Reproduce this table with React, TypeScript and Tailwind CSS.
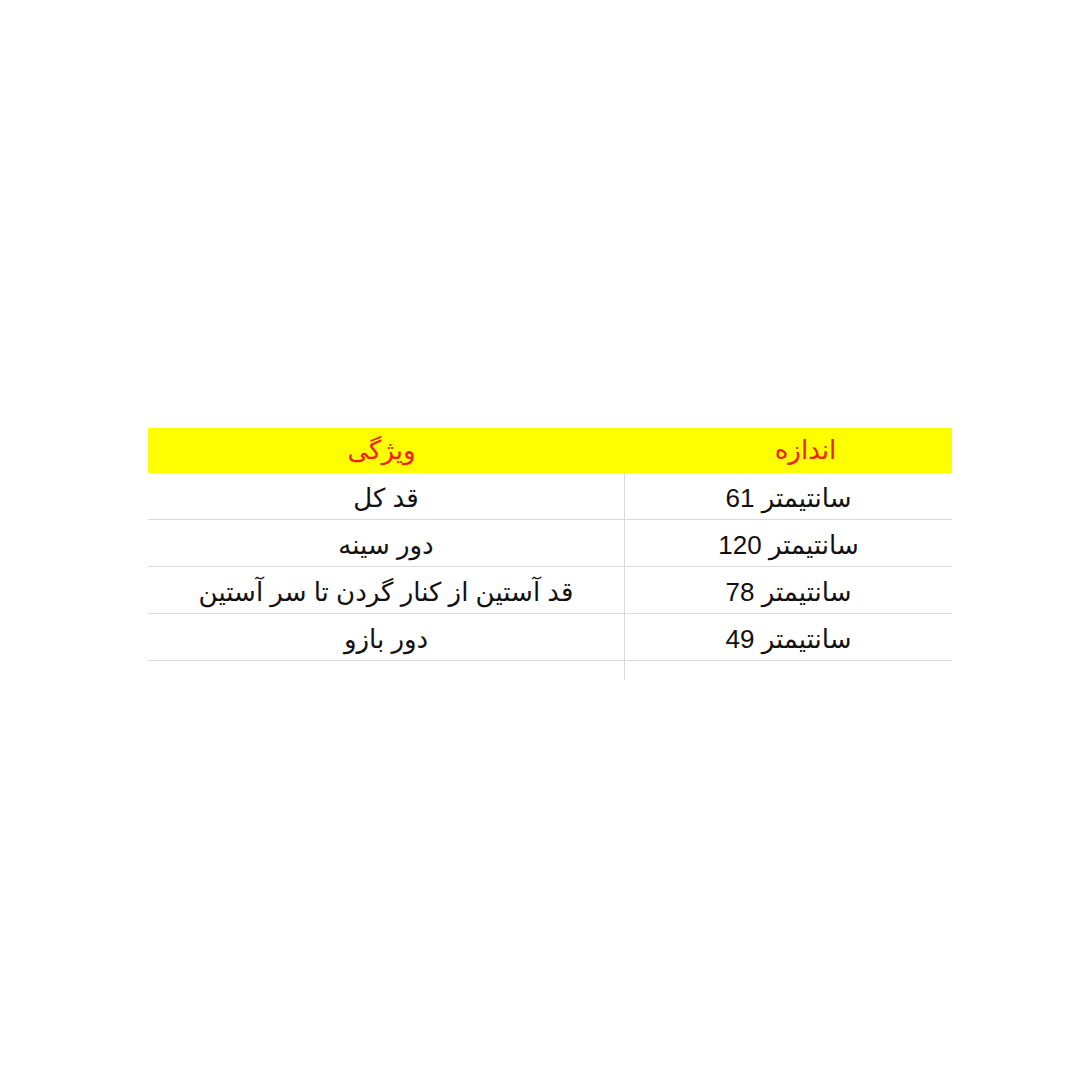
import React from "react";

const rows: [string, string][] = [
  ["قد کل", "سانتیمتر 61"],
  ["دور سینه", "سانتیمتر 120"],
  ["قد آستین از کنار گردن تا سر آستین", "سانتیمتر 78"],
  ["دور بازو", "سانتیمتر 49"],
];

export default function App() {
  return (
    <div
      className="w-[1080px] h-[1080px] bg-white pt-[428px] pl-[148px]"
      style={{ fontFamily: '"Liberation Sans", "DejaVu Sans", sans-serif' }}
    >
      <div className="w-[804px] text-[26px] text-[#111]">
        <div className="grid grid-cols-[477px_327px] h-[45px] bg-[#ffff00] text-[#f2200c]">
          <div className="flex items-center justify-center pr-[10px]" dir="rtl">ویژگی</div>
          <div className="flex items-center justify-center pl-[34px]" dir="rtl">اندازه</div>
        </div>
        {rows.map(([a, b], i) => (
          <div
            key={i}
            className="grid grid-cols-[477px_327px] h-[47px] border-b border-[#d9d9d9]"
          >
            <div className="flex items-center justify-center border-r border-[#d9d9d9] pt-[4px]" dir="rtl">
              {a}
            </div>
            <div className="flex items-center justify-center pt-[4px]" dir="rtl">
              {b}
            </div>
          </div>
        ))}
        <div className="grid grid-cols-[477px_327px] h-[19px]">
          <div className="border-r border-[#d9d9d9]" />
          <div />
        </div>
      </div>
    </div>
  );
}
